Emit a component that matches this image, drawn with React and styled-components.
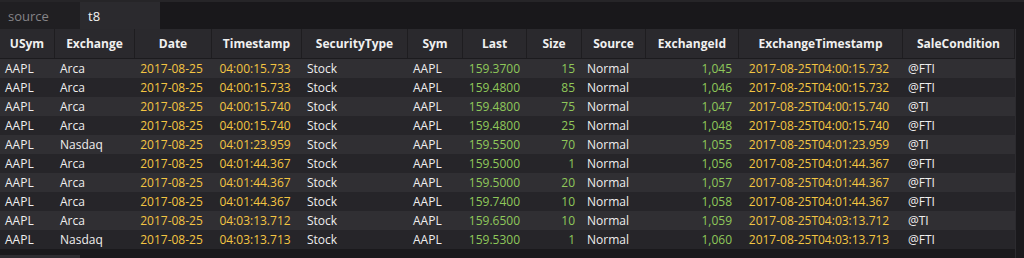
import React from "react";
import styled, { createGlobalStyle } from "styled-components";

const GlobalStyle = createGlobalStyle`
  html, body {
    margin: 0;
    padding: 0;
    background: #1b1a1d;
  }
`;

const columns = [
  { name: "USym", width: 55, kind: "text" },
  { name: "Exchange", width: 80, kind: "text" },
  { name: "Date", width: 77, kind: "date" },
  { name: "Timestamp", width: 90, kind: "date" },
  { name: "SecurityType", width: 106, kind: "text" },
  { name: "Sym", width: 55, kind: "text" },
  { name: "Last", width: 64, kind: "num" },
  { name: "Size", width: 55, kind: "num" },
  { name: "Source", width: 64, kind: "text" },
  { name: "ExchangeId", width: 93, kind: "num" },
  { name: "ExchangeTimestamp", width: 164, kind: "date" },
  { name: "SaleCondition", width: 112, kind: "text" },
];

const trades = [
  ["Arca", "04:00:15.733", "159.3700", "15", "1,045", "04:00:15.732", "@FTI"],
  ["Arca", "04:00:15.733", "159.4800", "85", "1,046", "04:00:15.732", "@FTI"],
  ["Arca", "04:00:15.740", "159.4800", "75", "1,047", "04:00:15.740", "@TI"],
  ["Arca", "04:00:15.740", "159.4800", "25", "1,048", "04:00:15.740", "@FTI"],
  ["Nasdaq", "04:01:23.959", "159.5500", "70", "1,055", "04:01:23.959", "@TI"],
  ["Arca", "04:01:44.367", "159.5000", "1", "1,056", "04:01:44.367", "@FTI"],
  ["Arca", "04:01:44.367", "159.5000", "20", "1,057", "04:01:44.367", "@FTI"],
  ["Arca", "04:01:44.367", "159.7400", "10", "1,058", "04:01:44.367", "@FTI"],
  ["Arca", "04:03:13.712", "159.6500", "10", "1,059", "04:03:13.712", "@TI"],
  ["Nasdaq", "04:03:13.713", "159.5300", "1", "1,060", "04:03:13.713", "@FTI"],
];

const rows = trades.map(([ex, ts, last, size, id, exTs, cond]) => [
  "AAPL",
  ex,
  "2017-08-25",
  ts,
  "Stock",
  "AAPL",
  last,
  size,
  "Normal",
  id,
  "2017-08-25T" + exTs,
  cond,
]);

const template = columns.map((c) => c.width + "px").join(" ");

const Page = styled.div`
  width: 1024px;
  height: 258px;
  display: flex;
  flex-direction: column;
  background: #1b1a1d;
  font-family: "Open Sans", "Noto Sans", sans-serif;
  font-size: 12px;
  color: #efeeee;
  overflow: hidden;
`;

const TabBar = styled.div`
  height: 29px;
  display: flex;
  background: #19181b;
  border-top: 2px solid #262528;
  box-sizing: border-box;
`;

const Tab = styled.div`
  width: 80px;
  display: flex;
  align-items: center;
  padding-left: 8px;
  box-sizing: border-box;
  font-size: 13px;
  background: ${(p) => (p.active ? "#2b2a2e" : "#201f22")};
  color: ${(p) => (p.active ? "#f2f2f2" : "#858488")};
`;

const Body = styled.div`
  display: flex;
  flex: 1;
  min-height: 0;
`;

const Grid = styled.div`
  width: 1015px;
  display: flex;
  flex-direction: column;
`;

const VScroll = styled.div`
  flex: 1;
  background: #1a191c;
  border-left: 1px solid #2c2b2f;
`;

const HeaderRow = styled.div`
  display: grid;
  grid-template-columns: ${template};
  height: 30px;
  background: #2a292d;
  border-bottom: 1px solid #1c1b1e;
  box-sizing: border-box;
`;

const HeaderCell = styled.div`
  display: flex;
  align-items: center;
  justify-content: center;
  font-weight: 700;
  color: #f0f0f0;
  border-right: 1px solid #1e1d20;
  white-space: nowrap;
`;

const Row = styled.div`
  display: grid;
  grid-template-columns: ${template};
  height: 19px;
  background: ${(p) => (p.odd ? "#262529" : "#302f33")};
`;

const kindStyles = {
  text: "justify-content: flex-start; padding-left: 5px; color: #efeeee;",
  date: "justify-content: center; padding-right: 4px; color: #f4c542;",
  num: "justify-content: flex-end; padding-right: 7px; color: #8fc85a;",
};

const Cell = styled.div`
  display: flex;
  align-items: center;
  white-space: nowrap;
  overflow: hidden;
  ${(p) => kindStyles[p.kind]}
`;

const HScroll = styled.div`
  flex: 1;
  display: flex;
  align-items: flex-end;
  background: #1a191c;
`;

const Thumb = styled.div`
  width: 80px;
  height: 3px;
  background: #2e2d31;
`;

export default function App() {
  return (
    <>
      <GlobalStyle />
      <Page>
        <TabBar>
          <Tab>source</Tab>
          <Tab active>t8</Tab>
        </TabBar>
        <Body>
          <Grid>
            <HeaderRow>
              {columns.map((c) => (
                <HeaderCell key={c.name}>{c.name}</HeaderCell>
              ))}
            </HeaderRow>
            {rows.map((r, i) => (
              <Row key={i} odd={i % 2 === 1}>
                {r.map((v, j) => (
                  <Cell key={j} kind={columns[j].kind}>
                    {v}
                  </Cell>
                ))}
              </Row>
            ))}
            <HScroll>
              <Thumb />
            </HScroll>
          </Grid>
          <VScroll />
        </Body>
      </Page>
    </>
  );
}
